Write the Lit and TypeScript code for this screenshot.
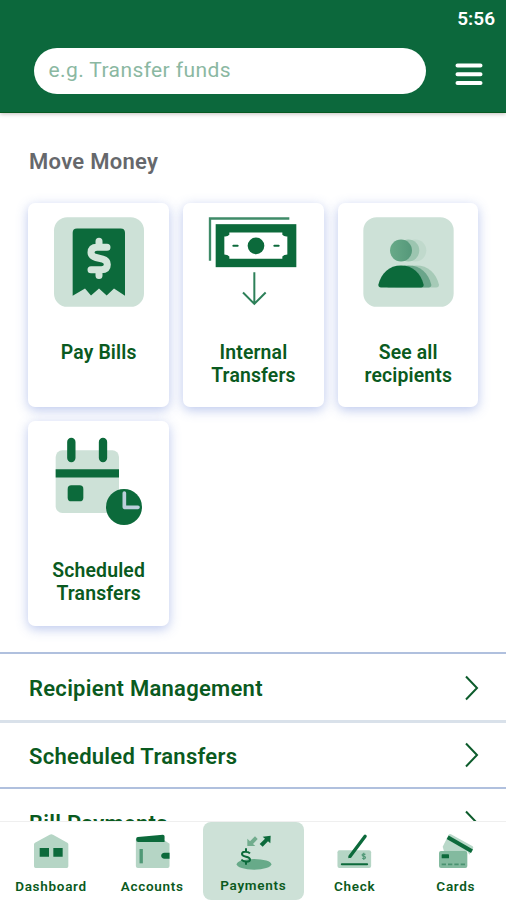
import { LitElement, html, css } from "lit";
import { customElement } from "lit/decorators.js";
import { classMap } from "lit/directives/class-map.js";

const DARK = "#0c6a3b";
const PALE = "#cde1d7";

const cardIcons = {
  bill: html`<svg class="art" viewBox="87 53.5 300 300">
    <rect x="102" y="66" width="270" height="269" rx="40" fill=${PALE}/>
    <path d="M158 302V113q0-13 13-13H302q13 0 13 13V302L282 280 260 301 237 280 213 301 195 280Z" fill=${DARK}/>
    <path d="M237 138V156M237 230V241M261 156H231q-18 0-18 16q0 11 15 15l20 5q14 4 14 16q0 16-18 16H213" fill="none" stroke="#d3e6db" stroke-width="21" stroke-linecap="round" stroke-linejoin="round"/>
  </svg>`,
  transfer: html`<svg class="art" viewBox="84 53.5 300 300">
    <path d="M105 197V70H343" fill="none" stroke="#3f8b68" stroke-width="7"/>
    <rect x="122" y="87" width="242" height="129" fill=${DARK}/>
    <path d="M163 112H322V119Q327 125 337 124V178Q327 178 322 184V191H163V184Q158 178 148 178V124Q158 125 163 119Z" fill="#fff"/>
    <circle cx="243" cy="152" r="25" fill=${DARK}/>
    <path d="M175 152H188M298 152H311" stroke=${DARK} stroke-width="6" stroke-linecap="round"/>
    <path d="M238 231V326M204 292L238 326 272 292" fill="none" stroke="#2d8059" stroke-width="6"/>
  </svg>`,
  people: html`<svg class="art" viewBox="84 53.5 300 300">
    <defs><linearGradient id="head"><stop offset="0" stop-color="#68aa88"/><stop offset="1" stop-color="#55987a"/></linearGradient></defs>
    <rect x="100" y="66" width="271" height="269" rx="40" fill=${PALE}/>
    <circle cx="256" cy="166" r="33" fill="#c0d9cc"/>
    <circle cx="235" cy="166" r="33" fill="#9cc5b0"/>
    <circle cx="213" cy="166" r="33" fill="url(#head)"/>
    <path d="M199 277q-8 0-8-8C200 233 224 211 259 211S318 233 327 269q0 8-8 8Z" fill="#a6cab7"/>
    <path d="M176 277q-8 0-8-8C177 233 201 211 236 211S295 233 304 269q0 8-8 8Z" fill="#6aa58a"/>
    <path d="M153 277q-8 0-8-8C154 233 178 211 213 211S272 233 281 269q0 8-8 8Z" fill=${DARK}/>
  </svg>`,
  calendar: html`<svg class="art" viewBox="87 57 300 300">
    <rect x="107" y="115" width="190" height="188" rx="20" fill=${PALE}/>
    <path d="M107 184H297" stroke=${DARK} stroke-width="25"/>
    <path d="M154 90V138M249 90V138" stroke=${DARK} stroke-width="25" stroke-linecap="round"/>
    <rect x="143" y="220" width="47" height="48" rx="11" fill=${DARK}/>
    <circle cx="312" cy="285" r="54" fill=${DARK}/>
    <path d="M313 243V286H354" fill="none" stroke="#bccfdb" stroke-width="11" stroke-linecap="round" stroke-linejoin="round"/>
  </svg>`,
};

const navIcons = {
  home: html`<svg class="glyph" viewBox="93 54 120 120">
    <path d="M102 163V97Q102 94 105 92L149 68Q154 65 159 68L202 92Q205 94 205 97V163Q205 168 200 168H107Q102 168 102 163Z" fill="#b5d5c5"/>
    <path d="M119 108H147V134H119ZM160 108H188V134H160Z" fill=${DARK}/>
  </svg>`,
  wallet: html`<svg class="glyph" viewBox="395.4 54 120 120">
    <path d="M407 82H488L508 95V162Q508 168 502 168H413Q407 168 407 162Z" fill="#b5d5c5"/>
    <path d="M408 80Q408 76 413 75L488 68Q493 68 493 73V90H414Q408 90 408 84Z" fill=${DARK}/>
    <path d="M423 111V154" stroke="#4f9876" stroke-width="10"/>
    <path d="M508 122H493Q483 123 483 131T493 140H508Z" fill=${DARK}/>
  </svg>`,
  pay: html`<svg class="glyph" viewBox="114 54 120 120">
    <ellipse cx="177" cy="157" rx="52" ry="16" fill="#67aa89"/>
    <path d="M153 109V118M153 149V158M165 124Q160 119 151 119Q141 119 141 126Q141 132 153 134Q165 136 165 143Q165 149 154 149Q145 149 139 143" fill="none" stroke=${DARK} stroke-width="6"/>
    <path d="M157 80 157 102 181 102 174 96 188 81 180 73 165 88Z" fill="#71ac8d"/>
    <path d="M227 71 226 94 219 88 203 104 194 96 210 80 203 74Z" fill=${DARK}/>
  </svg>`,
  check: html`<svg class="glyph" viewBox="72.6 54 120 120">
    <rect x="83" y="115" width="101" height="53" rx="6" fill="#b5d5c5"/>
    <path d="M96 157H172" stroke=${DARK} stroke-width="6" stroke-linecap="round"/>
    <path d="M162 122V144M167 127Q157 124 157 129Q157 132 162 133Q168 134 167 138Q164 142 157 139" fill="none" stroke="#4f9876" stroke-width="3.5"/>
    <path d="M121 133 166 73" stroke=${DARK} stroke-width="10" stroke-linecap="round"/>
    <path d="M115 139 126 135 118 129Z" fill=${DARK}/>
  </svg>`,
  cards: html`<svg class="glyph" viewBox="375 54 120 120">
    <path d="M416 68 Q419 65 423 67L488 103Q491 106 489 110L478 128 472 118H402L398 104Z" fill="#b9d8c9"/>
    <path d="M413 76 486 118" stroke=${DARK} stroke-width="12"/>
    <rect x="387" y="117" width="85" height="51" rx="6" fill="#83ba9f"/>
    <rect x="395" y="127" width="22" height="12" rx="2" fill=${DARK}/>
    <path d="M395 157H466" stroke="#4a9271" stroke-width="5" stroke-dasharray="13 6"/>
  </svg>`,
};

const shortcuts = [
  { art: cardIcons.bill, lines: ["Pay Bills"] },
  { art: cardIcons.transfer, lines: ["Internal", "Transfers"] },
  { art: cardIcons.people, lines: ["See all", "recipients"] },
  { art: cardIcons.calendar, lines: ["Scheduled", "Transfers"] },
];

const tabs = [
  { icon: navIcons.home, label: "Dashboard" },
  { icon: navIcons.wallet, label: "Accounts" },
  { icon: navIcons.pay, label: "Payments", active: true },
  { icon: navIcons.check, label: "Check" },
  { icon: navIcons.cards, label: "Cards" },
];

@customElement("app-root")
export class AppRoot extends LitElement {
  static styles = css`
    :host {
      display: flex;
      flex-direction: column;
      height: 900px;
      overflow: hidden;
      background: #fff;
      color: #0a5a20;
      font-family: Roboto, sans-serif;
      font-weight: 600;
    }
    * { box-sizing: border-box; }
    svg { display: block; flex: none; }
    header {
      flex: none;
      height: 113px;
      background: #0c683c;
      border-bottom: 1px solid #085a22;
      box-shadow: 0 1px 4px rgba(60, 40, 40, 0.3);
      z-index: 1;
    }
    .clock {
      height: 48px;
      padding: 7px 11px 0 0;
      text-align: right;
      color: #fff;
      font-size: 19px;
      line-height: 23px;
    }
    .bar { display: flex; align-items: flex-start; padding-left: 34px; }
    .search {
      width: 392px;
      height: 46px;
      border-radius: 23px;
      background: #fff;
      padding-left: 14.5px;
      font-size: 21px;
      font-weight: 400;
      line-height: 44px;
      letter-spacing: 0.4px;
      color: #8bb8a2;
    }
    .menu { margin: 15px 0 0 29px; }
    main { flex: 1; min-height: 0; overflow: hidden; }
    h1 {
      margin: 35px 0 0 29px;
      font-size: 22px;
      line-height: 28px;
      font-weight: 600;
      letter-spacing: 0.3px;
      color: #66686c;
    }
    .grid {
      display: grid;
      grid-template-columns: repeat(3, 140.5px);
      grid-auto-rows: 204.5px;
      gap: 14px 14.3px;
      padding: 26.5px 0 0 28.4px;
    }
    .card {
      display: flex;
      flex-direction: column;
      align-items: center;
      padding-top: 10px;
      border-radius: 7px;
      background: #fff;
      box-shadow: 0 3px 12px rgba(110, 135, 215, 0.46);
    }
    .art { width: 100px; height: 100px; }
    .label {
      margin-top: 28px;
      font-size: 19.4px;
      line-height: 23.3px;
      text-align: center;
      letter-spacing: 0.15px;
    }
    .list { margin-top: 26.8px; }
    .row {
      display: flex;
      align-items: center;
      justify-content: space-between;
      height: 67.5px;
      padding: 1px 26px 0 29px;
      border-top: 2px solid #b0c0de;
      font-size: 22px;
      letter-spacing: 0.28px;
    }
    .row.soft { border-top: 3px solid #d9e1ea; padding-top: 0; }
    .row span { padding-top: 2px; }
    nav {
      flex: none;
      display: grid;
      grid-template-columns: repeat(5, 1fr);
      height: 79px;
      border-top: 1px solid #efefef;
      background: #fff;
    }
    .tab {
      display: flex;
      flex-direction: column;
      align-items: center;
      padding-top: 8px;
      border-radius: 8px;
    }
    .tab.active { background: #cde1d7; margin-left: 0.6px; }
    .glyph { width: 40px; height: 40px; }
    .caption {
      margin-top: 8px;
      padding-left: 0.8px;
      font-size: 13.5px;
      line-height: 16px;
      letter-spacing: 0.7px;
    }
    .active .caption { margin-top: 7px; padding-left: 0; }
  `;

  render() {
    return html`
      <header>
        <div class="clock">5:56</div>
        <div class="bar">
          <div class="search">e.g. Transfer funds</div>
          <svg class="menu" width="28" height="24" viewBox="0 0 28 24">
            <path d="M2.5 2.5H25.5M2.5 11.3H25.5M2.5 20H25.5" stroke="#fff" stroke-width="4" stroke-linecap="round" />
          </svg>
        </div>
      </header>
      <main>
        <h1>Move Money</h1>
        <div class="grid">
          ${shortcuts.map((s) => html`
            <div class="card">${s.art}
              <div class="label">${s.lines.map((l) => html`<div>${l}</div>`)}</div>
            </div>`)}
        </div>
        <div class="list">
          ${["Recipient Management", "Scheduled Transfers", "Bill Payments"].map((t, i) => html`
            <div class=${classMap({ row: true, soft: i === 1 })}>
              <span>${t}</span>
              <svg width="16" height="26" viewBox="0 0 16 26">
                <path d="M2 1.5L13 13 2 24.5" fill="none" stroke="#0d5c2c" stroke-width="2" />
              </svg>
            </div>`)}
        </div>
      </main>
      <nav>
        ${tabs.map((t) => html`
          <div class=${classMap({ tab: true, active: !!t.active })}>
            ${t.icon}<span class="caption">${t.label}</span>
          </div>`)}
      </nav>
    `;
  }
}
